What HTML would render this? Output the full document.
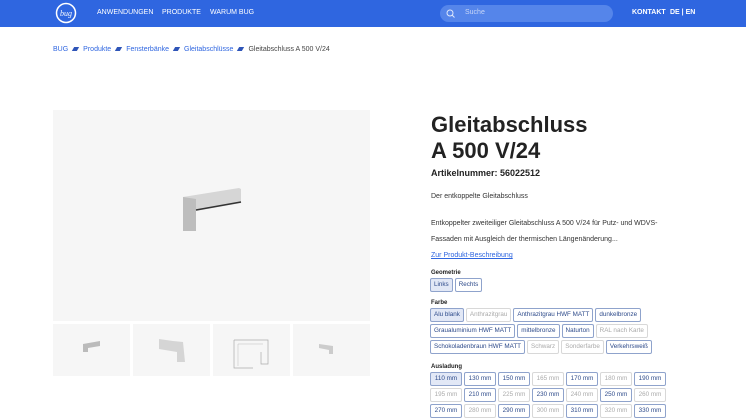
<!DOCTYPE html>
<html><head><meta charset="utf-8"><style>
*{box-sizing:border-box;margin:0;padding:0}
body{width:746px;height:409px;overflow:hidden;background:#fff;font-family:"Liberation Sans",sans-serif;color:#222;position:relative}
.hdr{position:absolute;left:0;top:0;width:746px;height:27px;background:#2f66e0}
.nav{position:absolute;top:9px;font-size:7px;color:#fff;letter-spacing:0}
.search{position:absolute;left:440px;top:5px;width:173px;height:17px;border-radius:9px;background:#5585ea}
.bc{position:absolute;top:46px;left:53px;font-size:7px;color:#2f66e0}
.bc i{display:inline-block;width:5px;height:4px;background:#2f55b8;transform:skewX(-30deg);margin:0 5px}
.main{position:absolute;left:53px;top:110px;width:317px;height:211px;background:#f6f6f6}
.th{position:absolute;top:324px;width:77px;height:52px;background:#f6f6f6}
h1{position:absolute;left:431px;top:112px;font-size:22px;line-height:26px;font-weight:bold;color:#222}
.t{position:absolute;left:431px;font-size:7px;color:#333}
.lbl{position:absolute;left:431px;font-size:6px;font-weight:bold;color:#222}
.row{position:absolute;left:430px;display:flex;gap:2px}
.b{height:14px;border:1px solid #8fa3cc;border-radius:2px;font-size:6.3px;line-height:12px;padding:0 3px;color:#2d4a8a;background:#fff;white-space:nowrap}
.b.s{background:#e2e8f6}
.b.d{border-color:#d8d8d8;color:#aaa}
.a .b{width:32px;text-align:center;padding:0}
</style></head><body>
<div class="hdr">
<svg style="position:absolute;left:55px;top:2px" width="22" height="22" viewBox="0 0 22 22"><circle cx="11" cy="11" r="9.5" fill="none" stroke="#fff" stroke-width="1.5"/><text x="11" y="14" font-size="8" font-style="italic" fill="#fff" text-anchor="middle" font-family="Liberation Serif">bug</text></svg>
<div class="nav" style="left:97px">ANWENDUNGEN</div>
<div class="nav" style="left:162px">PRODUKTE</div>
<div class="nav" style="left:210px">WARUM BUG</div>
<div class="search"><svg style="position:absolute;left:6px;top:4px" width="9" height="9" viewBox="0 0 9 9"><circle cx="4" cy="4" r="3" fill="none" stroke="#dfe8fb" stroke-width="1"/><path d="M6 6L8.5 8.5" stroke="#dfe8fb"/></svg><span style="position:absolute;left:25px;top:4px;font-size:7px;color:#c8d6f7">Suche</span></div>
<div class="nav" style="left:632px;font-weight:bold">KONTAKT</div>
<div class="nav" style="left:670px;font-weight:bold">DE | EN</div>
</div>
<div class="bc">BUG<i></i>Produkte<i></i>Fensterbänke<i></i>Gleitabschlüsse<i></i><span style="color:#444">Gleitabschluss A 500 V/24</span></div>
<div class="main"><svg width="317" height="211"><polygon points="130,87 186,78 188,79 188,93 143,101 130,91" fill="#d6d6d6"/><polygon points="130,87 143,89 143,121 130,121" fill="#bdbdbd"/><line x1="143" y1="100" x2="188" y2="92" stroke="#333" stroke-width="1.5"/></svg></div>
<div class="th" style="left:53px"><svg width="77" height="52"><polygon points="30,20 47,17 47,22 35,24 35,28 30,28" fill="#bbb"/></svg></div>
<div class="th" style="left:133px"><svg width="77" height="52"><polygon points="26,15 40,17 50,18 52,38 44,38 44,28 26,25" fill="#d5d5d5"/></svg></div>
<div class="th" style="left:213px"><svg width="77" height="52"><path d="M21 16H55V40H48V28M21 16V44H40" fill="none" stroke="#aaa" stroke-width=".7"/><path d="M25 20H50M25 20V42" fill="none" stroke="#bbb" stroke-width=".5"/></svg></div>
<div class="th" style="left:293px"><svg width="77" height="52"><polygon points="26,20 40,22 40,30 36,30 36,26 26,24" fill="#ccc"/></svg></div>
<h1>Gleitabschluss<br>A 500 V/24</h1>
<div class="t" style="top:168px;font-size:9px;font-weight:bold;color:#222">Artikelnummer: 56022512</div>
<div class="t" style="top:193px">Der entkoppelte Gleitabschluss</div>
<div class="t" style="top:216px;line-height:16px">Entkoppelter zweiteiliger Gleitabschluss A 500 V/24 für Putz- und WDVS-<br>Fassaden mit Ausgleich der thermischen Längenänderung...<br><span style="color:#2f66e0;text-decoration:underline">Zur Produkt-Beschreibung</span></div>
<div class="lbl" style="top:270px">Geometrie</div>
<div class="row" style="top:278px"><div class="b s">Links</div><div class="b">Rechts</div></div>
<div class="lbl" style="top:300px">Farbe</div>
<div class="row" style="top:308px"><div class="b s">Alu blank</div><div class="b d">Anthrazitgrau</div><div class="b">Anthrazitgrau HWF MATT</div><div class="b">dunkelbronze</div></div>
<div class="row" style="top:324px"><div class="b">Graualuminium HWF MATT</div><div class="b">mittelbronze</div><div class="b">Naturton</div><div class="b d">RAL nach Karte</div></div>
<div class="row" style="top:340px"><div class="b">Schokoladenbraun HWF MATT</div><div class="b d">Schwarz</div><div class="b d">Sonderfarbe</div><div class="b">Verkehrsweiß</div></div>
<div class="lbl" style="top:364px">Ausladung</div>
<div class="row a" style="top:372px"><div class="b s">110 mm</div><div class="b">130 mm</div><div class="b">150 mm</div><div class="b d">165 mm</div><div class="b">170 mm</div><div class="b d">180 mm</div><div class="b">190 mm</div></div>
<div class="row a" style="top:388px"><div class="b d">195 mm</div><div class="b">210 mm</div><div class="b d">225 mm</div><div class="b">230 mm</div><div class="b d">240 mm</div><div class="b">250 mm</div><div class="b d">260 mm</div></div>
<div class="row a" style="top:404px"><div class="b">270 mm</div><div class="b d">280 mm</div><div class="b">290 mm</div><div class="b d">300 mm</div><div class="b">310 mm</div><div class="b d">320 mm</div><div class="b">330 mm</div></div>
</body></html>
